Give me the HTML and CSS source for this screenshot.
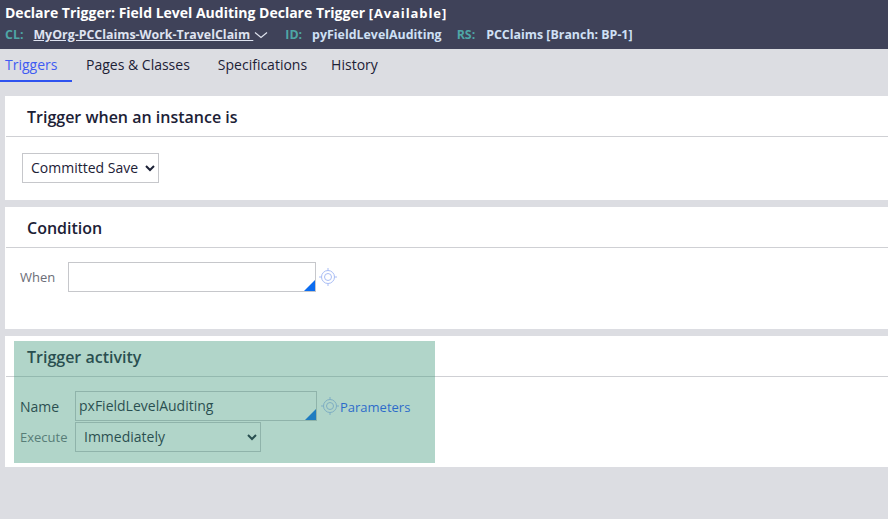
FILE: index.html
```html
<!DOCTYPE html>
<html lang="en">
<head>
    <meta charset="UTF-8">
    <meta name="viewport" content="width=device-width, initial-scale=1.0">
    <title>Declare Trigger</title>
    <link rel="stylesheet" href="styles.css">
</head>
<body>

    <header class="rule-header">
        <div class="rule-title">Declare Trigger: Field Level Auditing Declare Trigger <span class="rule-status">[Available]</span></div>
        <div class="rule-meta">
            <span class="meta-label meta-cl">CL:</span>
            <a class="meta-class">MyOrg-PCClaims-Work-TravelClaim&nbsp;</a>
            <svg class="meta-chevron" width="14" height="8" viewBox="0 0 14 8"><path d="M1 1.5 L7 6.5 L13 1.5" fill="none" stroke="#dfe3ee" stroke-width="1.2"/></svg>
            <span class="meta-label meta-id">ID:</span>
            <span class="meta-value meta-idvalue">pyFieldLevelAuditing</span>
            <span class="meta-label meta-rs">RS:</span>
            <span class="meta-value">PCClaims [Branch: BP-1]</span>
        </div>
    </header>

    <nav class="tabs">
        <a class="tab active">Triggers</a>
        <a class="tab">Pages &amp; Classes</a>
        <a class="tab">Specifications</a>
        <a class="tab">History</a>
    </nav>

    <main class="content">
        <section class="card card-when">
            <h2 class="card-title">Trigger when an instance is</h2>
            <div class="card-body body-when">
                <select class="field select-when">
                    <option>Committed Save</option>
                </select>
            </div>
        </section>

        <section class="card card-condition">
            <h2 class="card-title">Condition</h2>
            <div class="card-body body-condition">
                <label class="label label-when">When</label>
                <div class="field input-box input-when"></div>
                <svg class="target" width="20" height="20" viewBox="0 0 20 20"><use href="#target-icon"/></svg>
            </div>
        </section>

        <section class="card card-activity">
            <h2 class="card-title">Trigger activity</h2>
            <div class="card-body body-activity">
                <div class="row">
                    <label class="label label-name">Name</label>
                    <div class="field input-box input-name">pxFieldLevelAuditing</div>
                    <svg class="target target-name" width="20" height="20" viewBox="0 0 20 20"><use href="#target-icon"/></svg>
                    <a class="link">Parameters</a>
                </div>
                <div class="row">
                    <label class="label label-execute">Execute</label>
                    <select class="field select-execute">
                        <option>Immediately</option>
                    </select>
                </div>
            </div>
            <div class="highlight"></div>
        </section>
    </main>

    <svg width="0" height="0" class="defs">
        <symbol id="target-icon" viewBox="0 0 20 20">
            <g fill="none" stroke="#a9bdf5" stroke-width="1">
                <circle cx="10" cy="10" r="6.5"/>
                <circle cx="10" cy="10" r="3.5"/>
                <path d="M10 1 V3.5 M10 16.5 V19 M1 10 H3.5 M16.5 10 H19"/>
            </g>
        </symbol>
    </svg>

</body>
</html>
```

FILE: styles.css
```css
body {
    margin: 0;
    height: 519px;
    overflow: hidden;
    background: #dcdde2;
    font-family: "Open Sans", sans-serif;
    font-size: 14px;
    color: #1c2136;
}
.defs {
    display: block;
}
.rule-header {
    height: 49px;
    box-sizing: border-box;
    padding: 3px 5px 0;
    background: #3f4259;
    color: #fff;
}
.rule-title {
    font-size: 14px;
    font-weight: 700;
    line-height: 19px;
    white-space: nowrap;
}
.rule-status {
    font-size: 13px;
    letter-spacing: 0.9px;
}
.rule-meta {
    display: flex;
    align-items: center;
    margin-top: 3px;
    font-size: 12.4px;
    font-weight: 700;
    line-height: 18px;
    white-space: nowrap;
}
.meta-label {
    color: #4ea6a6;
}
.meta-cl {
    margin-right: 10px;
}
.meta-class {
    color: #dfe3f0;
    text-decoration: underline;
}
.meta-chevron {
    margin-left: 1px;
}
.meta-id {
    margin-left: 17px;
    margin-right: 10px;
}
.meta-rs {
    margin-left: 15px;
    margin-right: 11px;
}
.meta-value {
    color: #cfe0f5;
}
.tabs {
    display: flex;
    height: 33px;
}
.tab {
    padding: 6px 14px 0 5px;
    margin-right: 9px;
    line-height: 20px;
    color: #1c2136;
}
.tab.active {
    width: 53px;
    padding-right: 14px;
    margin-right: 0;
    color: #3e5bf2;
    border-bottom: 2px solid #2f53ef;
    height: 25px;
}
.tab:nth-child(2) {
    padding-left: 14px;
}
.tab:nth-child(3) {
    padding-left: 5px;
}
.tab:nth-child(4) {
    padding-left: 1px;
}
.content {
    display: flex;
    flex-direction: column;
    gap: 7px;
    margin: 14px 0 0 5px;
}
.card {
    position: relative;
    background: #fff;
}
.card-title {
    margin: 0 0 0 1px;
    padding-left: 21px;
    height: 40px;
    border-bottom: 1px solid #cfd0d4;
    font-size: 16px;
    font-weight: 600;
    line-height: 43px;
    color: #1c2136;
}
.card-when {
    height: 104px;
}
.card-condition {
    height: 122px;
}
.card-activity {
    height: 131px;
}
.field {
    box-sizing: border-box;
    border: 1px solid #c6c7cb;
    border-radius: 0;
    background: #fff;
    font-family: "Open Sans", sans-serif;
    font-size: 14px;
    color: #1c2136;
    height: 30px;
}
.body-when {
    padding: 16px 0 0 17px;
}
.select-when {
    width: 137px;
    padding-left: 4px;
    padding-bottom: 2px;
}
.body-condition {
    display: flex;
    align-items: flex-start;
    padding: 14px 0 0 15px;
}
.label {
    font-size: 13px;
    line-height: 30px;
    color: #6b6d77;
}
.label-when {
    width: 48px;
}
.input-box {
    position: relative;
    line-height: 28px;
    padding-left: 3px;
}
.input-box::after {
    content: "";
    position: absolute;
    right: 0;
    bottom: 0;
    border-style: solid;
    border-width: 0 0 11px 11px;
    border-color: transparent transparent #0b6cf0 transparent;
}
.input-when {
    width: 248px;
}
.target {
    margin: 5px 0 0 2px;
}
.target-name {
    margin-left: 3px;
}
.body-activity {
    padding: 14px 0 0 15px;
}
.row {
    display: flex;
    align-items: flex-start;
    height: 30px;
    margin-bottom: 1px;
}
.label-name {
    width: 55px;
    font-size: 14px;
    line-height: 32px;
    color: #1c2136;
}
.label-execute {
    width: 55px;
}
.input-name {
    width: 242px;
}
.select-execute {
    width: 186px;
    padding-left: 4px;
    padding-bottom: 2px;
}
.link {
    font-size: 13px;
    line-height: 32px;
    color: #1f4fff;
}
.highlight {
    position: absolute;
    left: 9px;
    top: 5px;
    width: 421px;
    height: 122px;
    background: rgba(60, 150, 120, 0.4);
}
```
